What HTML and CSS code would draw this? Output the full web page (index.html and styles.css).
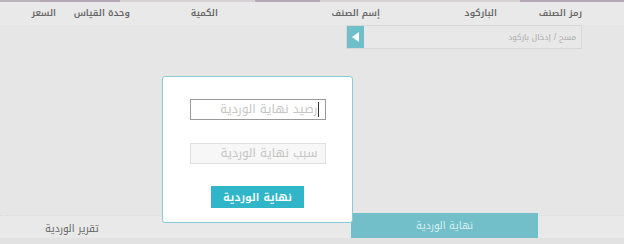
FILE: index.html
```html
<!DOCTYPE html>
<html lang="ar" dir="rtl">
<head>
    <meta charset="UTF-8">
    <title>نهاية الوردية</title>
    <link rel="stylesheet" href="styles.css">
</head>
<body>
    <div class="strip">
        <span class="seg seg-a"></span>
        <span class="seg seg-b"></span>
        <span class="seg seg-c"></span>
        <span class="seg seg-d"></span>
        <span class="seg seg-e"></span>
        <span class="seg seg-f"></span>
    </div>
    <div class="page">
        <div class="head-row">
            <span class="col col-code">رمز الصنف</span>
            <span class="col col-barcode">الباركود</span>
            <span class="col col-name">إسم الصنف</span>
            <span class="col col-qty">الكمية</span>
            <span class="col col-unit">وحدة القياس</span>
            <span class="col col-price">السعر</span>
        </div>
        <div class="scan-row">
            <div class="scan">
                <input type="text" placeholder="مسح / إدخال باركود">
                <button class="scan-btn"><span class="arrow"></span></button>
            </div>
        </div>
        <div class="spacer"></div>
        <div class="footer">
            <div class="tab">نهاية الوردية</div>
            <div class="report">تقرير الوردية</div>
        </div>
    </div>

    <div class="modal">
        <div class="field field-active">
            <span class="ph">رصيد نهاية الوردية</span>
            <span class="caret"></span>
        </div>
        <div class="field field-off">
            <span class="ph">سبب نهاية الوردية</span>
        </div>
        <button class="end-btn">نهاية الوردية</button>
    </div>
</body>
</html>
```

FILE: styles.css
```css
* {
    box-sizing: border-box;
}
body {
    margin: 0;
    background: #e6e6e6;
    font-family: "Noto Kufi Arabic", "DejaVu Sans", sans-serif;
    color: #666;
    height: 244px;
    overflow: hidden;
    line-height: 1.2;
}
.strip {
    display: flex;
    direction: ltr;
    height: 2px;
}
.seg { display: block; height: 2px; }
.seg-a { width: 40px; background: #b9b4b9; }
.seg-b { width: 80px; background: #b7a8b8; }
.seg-c { width: 135px; background: #d6d2d6; }
.seg-d { width: 65px; background: #b7a8b8; }
.seg-e { width: 200px; background: #d6d2d6; }
.seg-f { flex: 1; background: #b7a8b8; }

.page {
    display: flex;
    flex-direction: column;
    height: 242px;
}
.head-row {
    display: flex;
    padding-right: 42px;
    height: 23px;
    align-items: center;
    background: #e9e9e9;
    font-size: 9px;
    font-weight: 600;
    color: #666;
}
.col {
    flex: none;
    text-align: right;
    white-space: nowrap;
}
.col-code { width: 85px; }
.col-barcode { width: 117px; }
.col-name { width: 162px; }
.col-qty { width: 88px; }
.col-unit { width: 74px; }
.col-price { width: 50px; }

.scan-row {
    display: flex;
    padding-right: 42px;
}
.scan {
    display: flex;
    width: 236px;
    height: 24px;
    border: 1px solid #d8d8d8;
    background: #e8e8e8;
}
.scan input {
    flex: 1;
    min-width: 0;
    width: 100%;
    border: 0;
    background: transparent;
    font-family: inherit;
    font-size: 8px;
    padding: 0 5px;
    outline: none;
}
.scan input::placeholder {
    color: #aaa;
}
.scan-btn {
    flex: none;
    width: 17px;
    border: 0;
    padding: 0;
    background: #6fbfca;
    display: flex;
    align-items: center;
    justify-content: center;
}
.arrow {
    width: 0;
    height: 0;
    border-top: 5px solid transparent;
    border-bottom: 5px solid transparent;
    border-right: 7px solid #fff;
}
.spacer {
    flex: 1;
}
.footer {
    flex: none;
    display: flex;
    justify-content: space-between;
    align-items: flex-start;
    height: 29px;
    border-top: 1px dotted #dcdcdc;
    background: #e9e9e9;
    border-bottom: 6px solid #e2e2e2;
    padding-right: 86px;
    padding-left: 45px;
}
.tab {
    flex: none;
    width: 187px;
    height: 25px;
    margin-top: -3px;
    background: #72bfc9;
    color: #d9eff2;
    font-size: 10px;
    display: flex;
    align-items: center;
    justify-content: center;
}
.report {
    flex: none;
    margin-top: 7px;
    font-size: 10px;
    color: #666;
}

.modal {
    position: absolute;
    left: 162px;
    top: 76px;
    width: 191px;
    height: 147px;
    background: #fff;
    border: 1px solid #86cbd6;
    border-radius: 3px;
    display: flex;
    flex-direction: column;
    align-items: center;
    padding-top: 22px;
    gap: 23px;
}
.field {
    position: relative;
    width: 136px;
    height: 21px;
    display: flex;
    align-items: center;
    padding-right: 7px;
    font-size: 12px;
    color: #c6c6c6;
}
.field-active {
    border: 1px solid #9a9a9a;
}
.field-off {
    border: 1px solid #e0e0e0;
    background: #f7f7f7;
}
.caret {
    position: absolute;
    right: 6px;
    top: 2px;
    width: 1px;
    height: 15px;
    background: #333;
}
.end-btn {
    margin-top: -1px;
    width: 93px;
    height: 22px;
    border: 0;
    background: #31b6c9;
    color: #fff;
    font-family: inherit;
    font-size: 11px;
    font-weight: 600;
}
```
